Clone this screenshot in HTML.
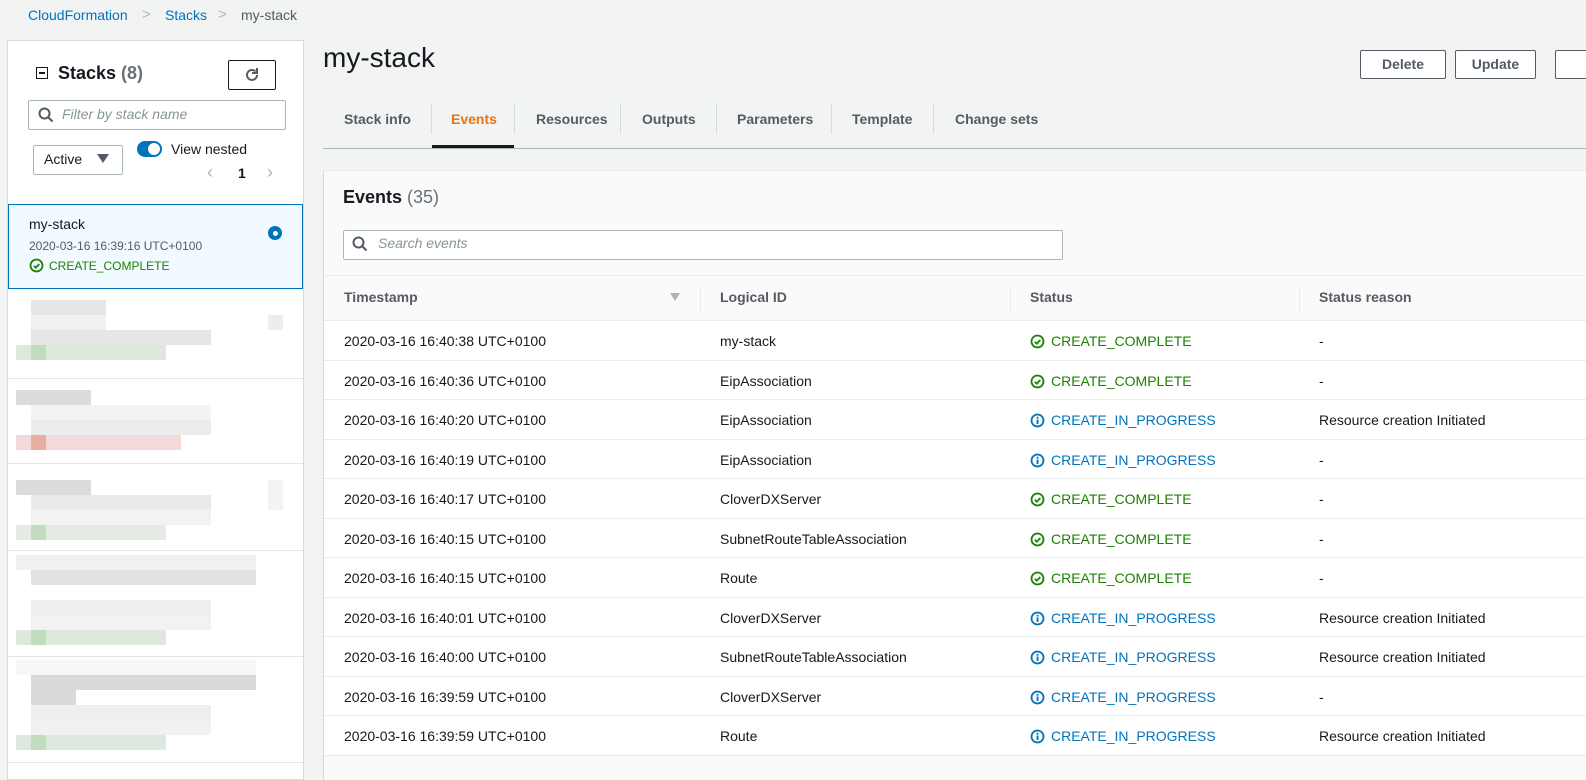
<!DOCTYPE html>
<html><head><meta charset="utf-8"><style>
*{box-sizing:border-box;margin:0;padding:0}
body{width:1586px;height:772px;overflow:hidden;background:#f2f3f3;font-family:"Liberation Sans",sans-serif;color:#16191f;position:relative;font-size:14px}
.a{position:absolute}
.b{position:absolute;height:15px}
.tab{position:absolute;top:111px;font-size:14px;font-weight:bold;color:#545b64}
.sep{position:absolute;top:104px;width:1px;height:30px;background:#d5dbdb}
.row{position:absolute;left:324px;width:1262px;background:#fff;border-bottom:1px solid #eaeded}
.row span{position:absolute;top:12px;font-size:14px}
.ok{color:#1d8102}.ip{color:#0073bb}
.btn{position:absolute;top:50px;height:29px;border:1px solid #545b64;background:#fff;font-weight:bold;font-size:14px;color:#545b64;text-align:center;line-height:27px;border-radius:2px}
</style></head><body>
<div class="a" style="left:28px;top:7px;font-size:14px;color:#0073bb">CloudFormation</div>
<div class="a" style="left:142px;top:6px;color:#aab7b8;font-size:15px">&gt;</div>
<div class="a" style="left:165px;top:7px;color:#0073bb">Stacks</div>
<div class="a" style="left:218px;top:6px;color:#aab7b8;font-size:15px">&gt;</div>
<div class="a" style="left:241px;top:7px;color:#545b64">my-stack</div>

<div class="a" style="left:7px;top:40px;width:297px;height:740px;background:#fff;border:1px solid #d5dbdb"></div>
<div class="a" style="left:36px;top:67px;width:12px;height:12px;border:1.5px solid #16191f"></div>
<div class="a" style="left:39px;top:72px;width:6px;height:1.5px;background:#16191f"></div>
<div class="a" style="left:58px;top:63px;font-size:18px;font-weight:bold">Stacks <span style="color:#687078">(8)</span></div>
<div class="a" style="left:228px;top:60px;width:48px;height:30px;border:1px solid #16191f;border-radius:2px;background:#fff"></div>
<svg class="a" style="left:243px;top:66px" width="18" height="18" viewBox="0 0 18 18"><path d="M14 9a5 5 0 1 1-1.5-3.6" fill="none" stroke="#545b64" stroke-width="2"/><path d="M14 2v5h-5" fill="none" stroke="#545b64" stroke-width="2"/></svg>
<div class="a" style="left:28px;top:100px;width:258px;height:30px;border:1px solid #aab7b8;border-radius:2px;background:#fff"></div>
<svg class="a" style="left:38px;top:107px" width="16" height="16"><circle cx="6.5" cy="6.5" r="5" fill="none" stroke="#545b64" stroke-width="2"/><path d="M10 10l4.5 4.5" stroke="#545b64" stroke-width="2"/></svg>
<div class="a" style="left:62px;top:106px;font-style:italic;color:#879596;font-size:14px">Filter by stack name</div>
<div class="a" style="left:33px;top:145px;width:90px;height:30px;border:1px solid #aab7b8;border-radius:2px;background:#fff"></div>
<div class="a" style="left:44px;top:151px">Active</div>
<div class="a" style="left:97px;top:154px;width:0;height:0;border-left:6px solid transparent;border-right:6px solid transparent;border-top:9px solid #545b64"></div>
<div class="a" style="left:137px;top:141px;width:25px;height:16px;border-radius:8px;background:#0073bb"></div>
<div class="a" style="left:148px;top:143px;width:12px;height:12px;border-radius:6px;background:#fff"></div>
<div class="a" style="left:171px;top:141px">View nested</div>
<div class="a" style="left:207px;top:162px;color:#aab7b8;font-size:18px">&lsaquo;</div>
<div class="a" style="left:238px;top:165px;font-weight:bold">1</div>
<div class="a" style="left:267px;top:162px;color:#aab7b8;font-size:18px">&rsaquo;</div>

<div class="a" style="left:8px;top:204px;width:295px;height:85px;background:#f1faff;border:1px solid #0073bb"></div>
<div class="a" style="left:29px;top:216px;font-size:14px">my-stack</div>
<div class="a" style="left:29px;top:239px;font-size:12px;color:#545b64">2020-03-16 16:39:16 UTC+0100</div>
<svg class="a" style="left:29px;top:258px" width="15" height="15"><circle cx="7.5" cy="7.5" r="6" fill="none" stroke="#1d8102" stroke-width="1.8"/><path d="M4.8 7.7l2 2 3.5-3.7" fill="none" stroke="#1d8102" stroke-width="1.8"/></svg>
<div class="a" style="left:49px;top:259px;font-size:12px;color:#1d8102">CREATE_COMPLETE</div>
<div class="a" style="left:268px;top:226px;width:14px;height:14px;border-radius:7px;background:#0073bb"></div>
<div class="a" style="left:272.5px;top:230.5px;width:5px;height:5px;border-radius:3px;background:#fff"></div>

<div class="b" style="left:31px;top:300px;width:75px;background:#e6e6e8"></div>
<div class="b" style="left:31px;top:315px;width:75px;background:#f1f1f1"></div>
<div class="b" style="left:268px;top:315px;width:15px;background:#ebeeee"></div>
<div class="b" style="left:31px;top:330px;width:180px;background:#e5e6e5"></div>
<div class="b" style="left:16px;top:345px;width:150px;background:#dfe8de"></div>
<div class="b" style="left:31px;top:345px;width:15px;background:#c2dcbf"></div>
<div class="a" style="left:8px;top:378px;width:295px;height:1px;background:#e5e5e5"></div>
<div class="b" style="left:16px;top:390px;width:75px;background:#dcdcde"></div>
<div class="b" style="left:31px;top:405px;width:180px;background:#f2f3f3"></div>
<div class="b" style="left:31px;top:420px;width:180px;background:#ececec"></div>
<div class="b" style="left:16px;top:435px;width:165px;background:#f3dada"></div>
<div class="b" style="left:31px;top:435px;width:15px;background:#e8aea2"></div>
<div class="a" style="left:8px;top:463px;width:295px;height:1px;background:#e5e5e5"></div>
<div class="b" style="left:16px;top:480px;width:75px;background:#dcdcdd"></div>
<div class="b" style="left:268px;top:480px;width:15px;height:30px;background:#f2f3f3"></div>
<div class="b" style="left:31px;top:495px;width:180px;background:#eaeaea"></div>
<div class="b" style="left:31px;top:510px;width:180px;background:#f1f2f1"></div>
<div class="b" style="left:16px;top:525px;width:150px;background:#e3ebe2"></div>
<div class="b" style="left:31px;top:525px;width:15px;background:#c2dcbf"></div>
<div class="a" style="left:8px;top:550px;width:295px;height:1px;background:#e5e5e5"></div>
<div class="b" style="left:16px;top:555px;width:240px;background:#f0f0f0"></div>
<div class="b" style="left:31px;top:570px;width:225px;background:#e2e2e3"></div>
<div class="b" style="left:31px;top:600px;width:180px;background:#eeeeee"></div>
<div class="b" style="left:31px;top:615px;width:180px;background:#f2f2f2"></div>
<div class="b" style="left:16px;top:630px;width:150px;background:#dfe8de"></div>
<div class="b" style="left:31px;top:630px;width:15px;background:#c2dcbf"></div>
<div class="a" style="left:8px;top:656px;width:295px;height:1px;background:#e5e5e5"></div>
<div class="b" style="left:16px;top:660px;width:240px;background:#f7f7f7"></div>
<div class="b" style="left:31px;top:675px;width:225px;background:#dadada"></div>
<div class="b" style="left:31px;top:690px;width:45px;background:#d9d9d8"></div>
<div class="b" style="left:31px;top:705px;width:180px;background:#eeeeee"></div>
<div class="b" style="left:31px;top:720px;width:180px;background:#f1f1f1"></div>
<div class="b" style="left:16px;top:735px;width:150px;background:#dfe8de"></div>
<div class="b" style="left:31px;top:735px;width:15px;background:#c2dcbf"></div>
<div class="a" style="left:8px;top:762px;width:295px;height:1px;background:#e5e5e5"></div>

<div class="a" style="left:323px;top:42px;font-size:28px;color:#16191f">my-stack</div>
<div class="btn" style="left:1360px;width:86px">Delete</div>
<div class="btn" style="left:1455px;width:81px">Update</div>
<div class="btn" style="left:1555px;width:40px"></div>

<div class="tab" style="left:344px">Stack info</div>
<div class="sep" style="left:431px"></div>
<div class="tab" style="left:451px;color:#ec7211">Events</div>
<div class="sep" style="left:514px"></div>
<div class="tab" style="left:536px">Resources</div>
<div class="sep" style="left:620px"></div>
<div class="tab" style="left:642px">Outputs</div>
<div class="sep" style="left:716px"></div>
<div class="tab" style="left:737px">Parameters</div>
<div class="sep" style="left:831px"></div>
<div class="tab" style="left:852px">Template</div>
<div class="sep" style="left:933px"></div>
<div class="tab" style="left:955px">Change sets</div>
<div class="a" style="left:323px;top:148px;width:1263px;height:1px;background:#aab7b8"></div>
<div class="a" style="left:432px;top:145px;width:82px;height:3px;background:#16191f"></div>

<div class="a" style="left:323px;top:170px;width:1263px;height:610px;background:#fafafa;border-left:1px solid #d5dbdb;border-top:1px solid #eaeded"></div>
<div class="a" style="left:343px;top:187px;font-size:18px;font-weight:bold">Events <span style="font-weight:normal;color:#687078">(35)</span></div>
<div class="a" style="left:343px;top:230px;width:720px;height:30px;border:1px solid #aab7b8;border-radius:2px;background:#fff"></div>
<svg class="a" style="left:352px;top:236px" width="16" height="16"><circle cx="6.5" cy="6.5" r="5" fill="none" stroke="#545b64" stroke-width="2"/><path d="M10 10l4.5 4.5" stroke="#545b64" stroke-width="2"/></svg>
<div class="a" style="left:378px;top:235px;font-style:italic;color:#879596">Search events</div>
<div class="a" style="left:324px;top:275px;width:1262px;height:1px;background:#eaeded"></div>
<div class="a" style="left:344px;top:289px;font-weight:bold;color:#545b64">Timestamp</div>
<div class="a" style="left:670px;top:293px;width:0;height:0;border-left:5px solid transparent;border-right:5px solid transparent;border-top:8px solid #aab7b8"></div>
<div class="a" style="left:700px;top:288px;width:1px;height:24px;background:#eaeded"></div>
<div class="a" style="left:720px;top:289px;font-weight:bold;color:#545b64">Logical ID</div>
<div class="a" style="left:1010px;top:288px;width:1px;height:24px;background:#eaeded"></div>
<div class="a" style="left:1030px;top:289px;font-weight:bold;color:#545b64">Status</div>
<div class="a" style="left:1299px;top:288px;width:1px;height:24px;background:#eaeded"></div>
<div class="a" style="left:1319px;top:289px;font-weight:bold;color:#545b64">Status reason</div>
<div class="a" style="left:324px;top:320px;width:1262px;height:1px;background:#eaeded"></div>

<div id="rows"></div>
<script>
var d=[["16:40:38","my-stack",1,"-"],["16:40:36","EipAssociation",1,"-"],["16:40:20","EipAssociation",0,"Resource creation Initiated"],["16:40:19","EipAssociation",0,"-"],["16:40:17","CloverDXServer",1,"-"],["16:40:15","SubnetRouteTableAssociation",1,"-"],["16:40:15","Route",1,"-"],["16:40:01","CloverDXServer",0,"Resource creation Initiated"],["16:40:00","SubnetRouteTableAssociation",0,"Resource creation Initiated"],["16:39:59","CloverDXServer",0,"-"],["16:39:59","Route",0,"Resource creation Initiated"]];
var okI='<svg style="position:absolute;left:706px;top:13px" width="15" height="15"><circle cx="7.5" cy="7.5" r="6" fill="none" stroke="#1d8102" stroke-width="1.8"/><path d="M4.8 7.7l2 2 3.5-3.7" fill="none" stroke="#1d8102" stroke-width="1.8"/></svg>';
var ipI='<svg style="position:absolute;left:706px;top:13px" width="15" height="15"><circle cx="7.5" cy="7.5" r="6" fill="none" stroke="#0073bb" stroke-width="1.8"/><rect x="6.6" y="6.5" width="1.9" height="4.5" fill="#0073bb"/><rect x="6.6" y="3.8" width="1.9" height="1.8" fill="#0073bb"/></svg>';
var h='';
d.forEach(function(r,i){var t=Math.round(321+i*39.5),b=Math.round(321+(i+1)*39.5);
h+='<div class="row" style="top:'+t+'px;height:'+(b-t)+'px"><span style="left:20px">2020-03-16 '+r[0]+' UTC+0100</span><span style="left:396px">'+r[1]+'</span>'+(r[2]?okI:ipI)+'<span class="'+(r[2]?'ok':'ip')+'" style="left:727px">'+(r[2]?'CREATE_COMPLETE':'CREATE_IN_PROGRESS')+'</span><span style="left:995px">'+r[3]+'</span></div>';});
document.getElementById('rows').innerHTML=h;
</script>
</body></html>
